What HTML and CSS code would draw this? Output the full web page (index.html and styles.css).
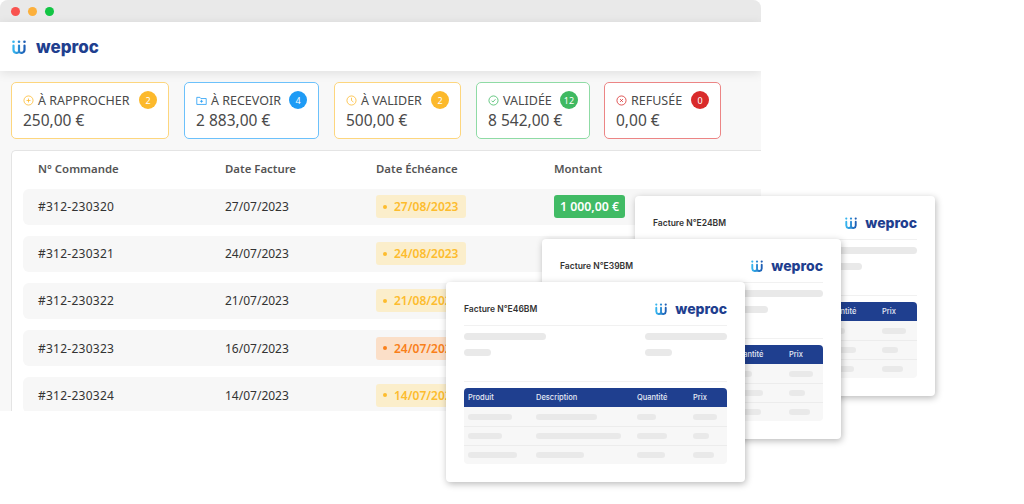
FILE: index.html
```html
<!DOCTYPE html>
<html>
<head>
  <meta charset="utf-8">
  <title>Weproc</title>
  <link rel="stylesheet" href="styles.css">
</head>
<body>
  <svg class="defs" width="0" height="0">
    <defs>
      <linearGradient id="logo-grad" x1="0" y1="0" x2="1" y2="0">
        <stop offset="0" stop-color="#35b4ee"/>
        <stop offset="1" stop-color="#1f5fb5"/>
      </linearGradient>
      <symbol id="logo-mark" viewBox="0 0 14 14">
        <path d="M1.500 5.500v4.300a3 3 0 0 0 5.500 1.700a3 3 0 0 0 5.500-1.700V5.500M7 5.500v5.500" fill="none" stroke="url(#logo-grad)" stroke-width="2.200" stroke-linecap="round"/>
        <circle cx="1.500" cy="1.800" r="1.300" fill="#35b4ee"/>
        <circle cx="7" cy="1.800" r="1.300" fill="#2a8ad4"/>
        <circle cx="12.500" cy="1.800" r="1.300" fill="#1f5fb5"/>
      </symbol>
    </defs>
  </svg>

  <div class="window">
    <div class="titlebar">
      <span class="dot red"></span>
      <span class="dot orange"></span>
      <span class="dot green"></span>
    </div>

    <div class="header">
      <div class="logo">
        <svg class="logo-icon"><use href="#logo-mark"/></svg>
        <span class="logo-text">weproc</span>
      </div>
    </div>

    <div class="cards">
      <div class="card card-yellow card-1">
        <div class="card-top">
          <svg class="card-icon" viewBox="0 0 14 14"><circle cx="7" cy="7" r="5.800"/><path d="M4.500 7h5M7 4.500v5"/></svg>
          <span class="card-label">À RAPPROCHER</span>
          <span class="count">2</span>
        </div>
        <div class="card-value">250,00 €</div>
      </div>
      <div class="card card-blue card-2">
        <div class="card-top">
          <svg class="card-icon" viewBox="0 0 14 14"><path d="M1 3h4l1.200 1.500H13v7.500H1z"/><path d="M5 8h4M7 6.200v3.600"/></svg>
          <span class="card-label">À RECEVOIR</span>
          <span class="count">4</span>
        </div>
        <div class="card-value">2 883,00 €</div>
      </div>
      <div class="card card-yellow card-3">
        <div class="card-top">
          <svg class="card-icon" viewBox="0 0 14 14"><circle cx="7" cy="7" r="5.800"/><path d="M7 3.500V7l2.500 2"/></svg>
          <span class="card-label">À VALIDER</span>
          <span class="count">2</span>
        </div>
        <div class="card-value">500,00 €</div>
      </div>
      <div class="card card-green card-4">
        <div class="card-top">
          <svg class="card-icon" viewBox="0 0 14 14"><circle cx="7" cy="7" r="5.800"/><path d="M4.500 7.200l1.800 1.800 3.200-3.600"/></svg>
          <span class="card-label">VALIDÉE</span>
          <span class="count">12</span>
        </div>
        <div class="card-value">8 542,00 €</div>
      </div>
      <div class="card card-red card-5">
        <div class="card-top">
          <svg class="card-icon" viewBox="0 0 14 14"><circle cx="7" cy="7" r="5.800"/><path d="M5.200 5.200l3.600 3.600M8.800 5.200l-3.600 3.600"/></svg>
          <span class="card-label">REFUSÉE</span>
          <span class="count">0</span>
        </div>
        <div class="card-value">0,00 €</div>
      </div>
    </div>

    <div class="panel">
      <div class="table-head">
        <span>N° Commande</span>
        <span>Date Facture</span>
        <span>Date Échéance</span>
        <span>Montant</span>
      </div>
      <div class="row">
        <span class="order">#312-230320</span>
        <span>27/07/2023</span>
        <span><span class="due">27/08/2023</span></span>
        <span class="amount">1 000,00 €</span>
      </div>
      <div class="row">
        <span class="order">#312-230321</span>
        <span>24/07/2023</span>
        <span><span class="due">24/08/2023</span></span>
      </div>
      <div class="row">
        <span class="order">#312-230322</span>
        <span>21/07/2023</span>
        <span><span class="due">21/08/2023</span></span>
      </div>
      <div class="row">
        <span class="order">#312-230323</span>
        <span>16/07/2023</span>
        <span><span class="due late">24/07/2023</span></span>
      </div>
      <div class="row">
        <span class="order">#312-230324</span>
        <span>14/07/2023</span>
        <span><span class="due">14/07/2023</span></span>
      </div>
    </div>
  </div>

  <div class="invoice invoice-back">
    <div class="invoice-top">
      <span class="invoice-title">Facture N°E24BM</span>
      <div class="logo logo-small">
        <svg class="logo-icon"><use href="#logo-mark"/></svg>
        <span class="logo-text">weproc</span>
      </div>
    </div>
    <div class="info">
      <div class="info-col"><i class="bar w-82"></i><i class="bar w-27"></i></div>
      <div class="info-col"><i class="bar w-82"></i><i class="bar w-27"></i></div>
    </div>
    <div class="inv-table">
      <div class="inv-head"><span>Produit</span><span>Description</span><span>Quantité</span><span>Prix</span></div>
      <div class="inv-row"><i class="bar" style="width:44px"></i><i class="bar" style="width:61px"></i><i class="bar" style="width:19px"></i><i class="bar" style="width:24px"></i></div>
      <div class="inv-row"><i class="bar" style="width:34px"></i><i class="bar" style="width:85px"></i><i class="bar" style="width:30px"></i><i class="bar" style="width:16px"></i></div>
      <div class="inv-row"><i class="bar" style="width:49px"></i><i class="bar" style="width:48px"></i><i class="bar" style="width:28px"></i><i class="bar" style="width:21px"></i></div>
    </div>
  </div>

  <div class="invoice invoice-mid">
    <div class="invoice-top">
      <span class="invoice-title">Facture N°E39BM</span>
      <div class="logo logo-small">
        <svg class="logo-icon"><use href="#logo-mark"/></svg>
        <span class="logo-text">weproc</span>
      </div>
    </div>
    <div class="info">
      <div class="info-col"><i class="bar w-82"></i><i class="bar w-27"></i></div>
      <div class="info-col"><i class="bar w-82"></i><i class="bar w-27"></i></div>
    </div>
    <div class="inv-table">
      <div class="inv-head"><span>Produit</span><span>Description</span><span>Quantité</span><span>Prix</span></div>
      <div class="inv-row"><i class="bar" style="width:44px"></i><i class="bar" style="width:61px"></i><i class="bar" style="width:19px"></i><i class="bar" style="width:24px"></i></div>
      <div class="inv-row"><i class="bar" style="width:34px"></i><i class="bar" style="width:85px"></i><i class="bar" style="width:30px"></i><i class="bar" style="width:16px"></i></div>
      <div class="inv-row"><i class="bar" style="width:49px"></i><i class="bar" style="width:48px"></i><i class="bar" style="width:28px"></i><i class="bar" style="width:21px"></i></div>
    </div>
  </div>

  <div class="invoice invoice-front">
    <div class="invoice-top">
      <span class="invoice-title">Facture N°E46BM</span>
      <div class="logo logo-small">
        <svg class="logo-icon"><use href="#logo-mark"/></svg>
        <span class="logo-text">weproc</span>
      </div>
    </div>
    <div class="info">
      <div class="info-col"><i class="bar w-82"></i><i class="bar w-27"></i></div>
      <div class="info-col"><i class="bar w-82"></i><i class="bar w-27"></i></div>
    </div>
    <div class="inv-table">
      <div class="inv-head"><span>Produit</span><span>Description</span><span>Quantité</span><span>Prix</span></div>
      <div class="inv-row"><i class="bar" style="width:44px"></i><i class="bar" style="width:61px"></i><i class="bar" style="width:19px"></i><i class="bar" style="width:24px"></i></div>
      <div class="inv-row"><i class="bar" style="width:34px"></i><i class="bar" style="width:85px"></i><i class="bar" style="width:30px"></i><i class="bar" style="width:16px"></i></div>
      <div class="inv-row"><i class="bar" style="width:49px"></i><i class="bar" style="width:48px"></i><i class="bar" style="width:28px"></i><i class="bar" style="width:21px"></i></div>
    </div>
  </div>
</body>
</html>
```

FILE: styles.css
```css
html, body {
  margin: 0;
  height: 504px;
  overflow: hidden;
  background: #fff;
}

body {
  position: relative;
  font-family: "Noto Sans", "Open Sans", sans-serif;
  color: #4a4a4a;
}

.defs {
  position: absolute;
}

.window {
  width: 761px;
  height: 411px;
  background: #f8f8f8;
  border-top-left-radius: 8px;
  border-top-right-radius: 8px;
  overflow: hidden;
}

.titlebar {
  height: 22px;
  background: #e9e9e9;
  display: flex;
  align-items: center;
  gap: 8px;
  padding-left: 11px;
}

.dot {
  width: 9px;
  height: 9px;
  border-radius: 50%;
}

.dot.red { background: #f9534f; }
.dot.orange { background: #fcb03c; }
.dot.green { background: #12c544; }

.header {
  height: 49px;
  background: #fff;
  box-shadow: 0 2px 10px rgba(0, 0, 0, 0.1);
  display: flex;
  align-items: center;
  padding-left: 12px;
}

.logo {
  display: flex;
  align-items: center;
  gap: 10px;
}

.logo-icon {
  width: 14px;
  height: 14px;
}

.logo-text {
  font-family: Inter, Roboto, sans-serif;
  font-weight: 800;
  font-size: 17px;
  line-height: 20px;
  color: #1f3f8f;
}

.cards {
  display: flex;
  gap: 15px;
  padding: 11px 0 0 11px;
}

.card {
  box-sizing: border-box;
  height: 57px;
  background: #fff;
  border: 1px solid;
  border-radius: 5px;
  padding: 7px 11px 0;
}

.card-1 { width: 158px; }
.card-2 { width: 135px; }
.card-3 { width: 127px; }
.card-4 { width: 114px; }
.card-5 { width: 117px; margin-left: -1px; }

.card-top {
  display: flex;
  align-items: center;
  height: 20px;
  font-size: 12.500px;
}

.card-icon {
  width: 11px;
  height: 11px;
  flex: none;
  margin-right: 4px;
  fill: none;
  stroke-width: 1;
}

.card-label {
  flex: 1;
  white-space: nowrap;
}

.count {
  width: 18px;
  height: 18px;
  border-radius: 50%;
  color: #fff;
  font-size: 9px;
  display: flex;
  align-items: center;
  justify-content: center;
  flex: none;
}

.card-value {
  font-size: 15.500px;
  line-height: 20px;
}

.card-yellow { border-color: #fdd67e; }
.card-yellow .count { background: #fcb92c; }
.card-yellow .card-icon { stroke: #fcb92c; }
.card-blue { border-color: #6cc1fb; }
.card-blue .count { background: #1e9bf5; }
.card-blue .card-icon { stroke: #1e9bf5; }
.card-green { border-color: #8fdba5; }
.card-green .count { background: #3fb962; }
.card-green .card-icon { stroke: #3fb962; }
.card-red { border-color: #ec8585; }
.card-red .count { background: #d92b2b; }
.card-red .card-icon { stroke: #d92b2b; }

.panel {
  margin: 11px 0 0 11px;
  height: 300px;
  background: #fff;
  border: 1px solid #e4e4e4;
  border-right: 0;
  border-radius: 5px 0 0 0;
  padding-left: 11px;
}

.table-head,
.row {
  display: grid;
  grid-template-columns: 187px 151px 178px auto;
  padding-left: 15px;
  font-size: 12px;
  align-items: center;
}

.table-head {
  box-sizing: border-box;
  height: 38px;
  padding-bottom: 4px;
  font-size: 11.400px;
  font-weight: 600;
  color: #555;
}

.row {
  height: 35.500px;
  margin-bottom: 11.600px;
  background: #f7f7f7;
  border-radius: 6px 0 0 6px;
  color: #333;
}

.order {
  letter-spacing: 0.250px;
}

.due {
  display: inline-flex;
  align-items: center;
  height: 23px;
  padding: 0 7px;
  border-radius: 3px;
  background: #fbeecb;
  color: #fdbc2e;
  font-weight: 600;
}

.due::before {
  content: "";
  width: 4px;
  height: 4px;
  margin-right: 7px;
  border-radius: 50%;
  background: currentColor;
}

.due.late {
  background: #fbdfc8;
  color: #f9801a;
}

.amount {
  justify-self: start;
  height: 23px;
  line-height: 23px;
  padding: 0 6px;
  border-radius: 3px;
  background: #41bb65;
  color: #fff;
  font-size: 12.300px;
  font-weight: 600;
}

/* invoices lie on top of the window, each one a bit further back */
.invoice {
  position: absolute;
  box-sizing: border-box;
  width: 299px;
  height: 200px;
  background: #fff;
  border-radius: 4px;
  padding: 0 18px;
  box-shadow: 1px 2px 7px rgba(0, 0, 0, 0.28);
}

.invoice-back { left: 635px; top: 196px; width: 300px; }
.invoice-mid { left: 542px; top: 239px; }
.invoice-front { left: 446px; top: 282px; }

.invoice-top {
  box-sizing: border-box;
  height: 44px;
  padding-top: 10px;
  display: flex;
  align-items: center;
  justify-content: space-between;
  border-bottom: 1px solid #f1f1f1;
}

.invoice-title {
  font-family: Inter, Roboto, sans-serif;
  font-size: 8.500px;
  font-weight: 600;
  color: #333;
}

.logo-small .logo-text {
  font-size: 14px;
}

.logo-small {
  gap: 8px;
}

.logo-small .logo-icon {
  width: 12px;
  height: 12px;
}

.info {
  height: 55px;
  display: flex;
  justify-content: space-between;
  border-bottom: 1px solid #f1f1f1;
}

.info-col {
  width: 82px;
  display: flex;
  flex-direction: column;
  gap: 9px;
  padding-top: 7px;
}

.bar {
  display: block;
  height: 7px;
  border-radius: 4px;
  background: #e9e9e9;
}

.w-82 { width: 82px; }
.w-27 { width: 27px; }

.inv-table {
  margin-top: 6px;
  border-radius: 4px;
  overflow: hidden;
  background: #f7f7f7;
}

.inv-head,
.inv-row {
  display: grid;
  grid-template-columns: 68px 101px 56px auto;
  align-items: center;
  padding-left: 4px;
  height: 19px;
}

.inv-head {
  background: #1f3f8f;
  color: #e6eaf5;
  font-family: Inter, Roboto, sans-serif;
  font-size: 7.500px;
  font-weight: 500;
}

.inv-row {
  border-top: 1px solid #ececec;
  box-sizing: border-box;
}

.inv-head + .inv-row {
  border-top: 0;
}

.inv-row .bar {
  height: 6px;
}
```
